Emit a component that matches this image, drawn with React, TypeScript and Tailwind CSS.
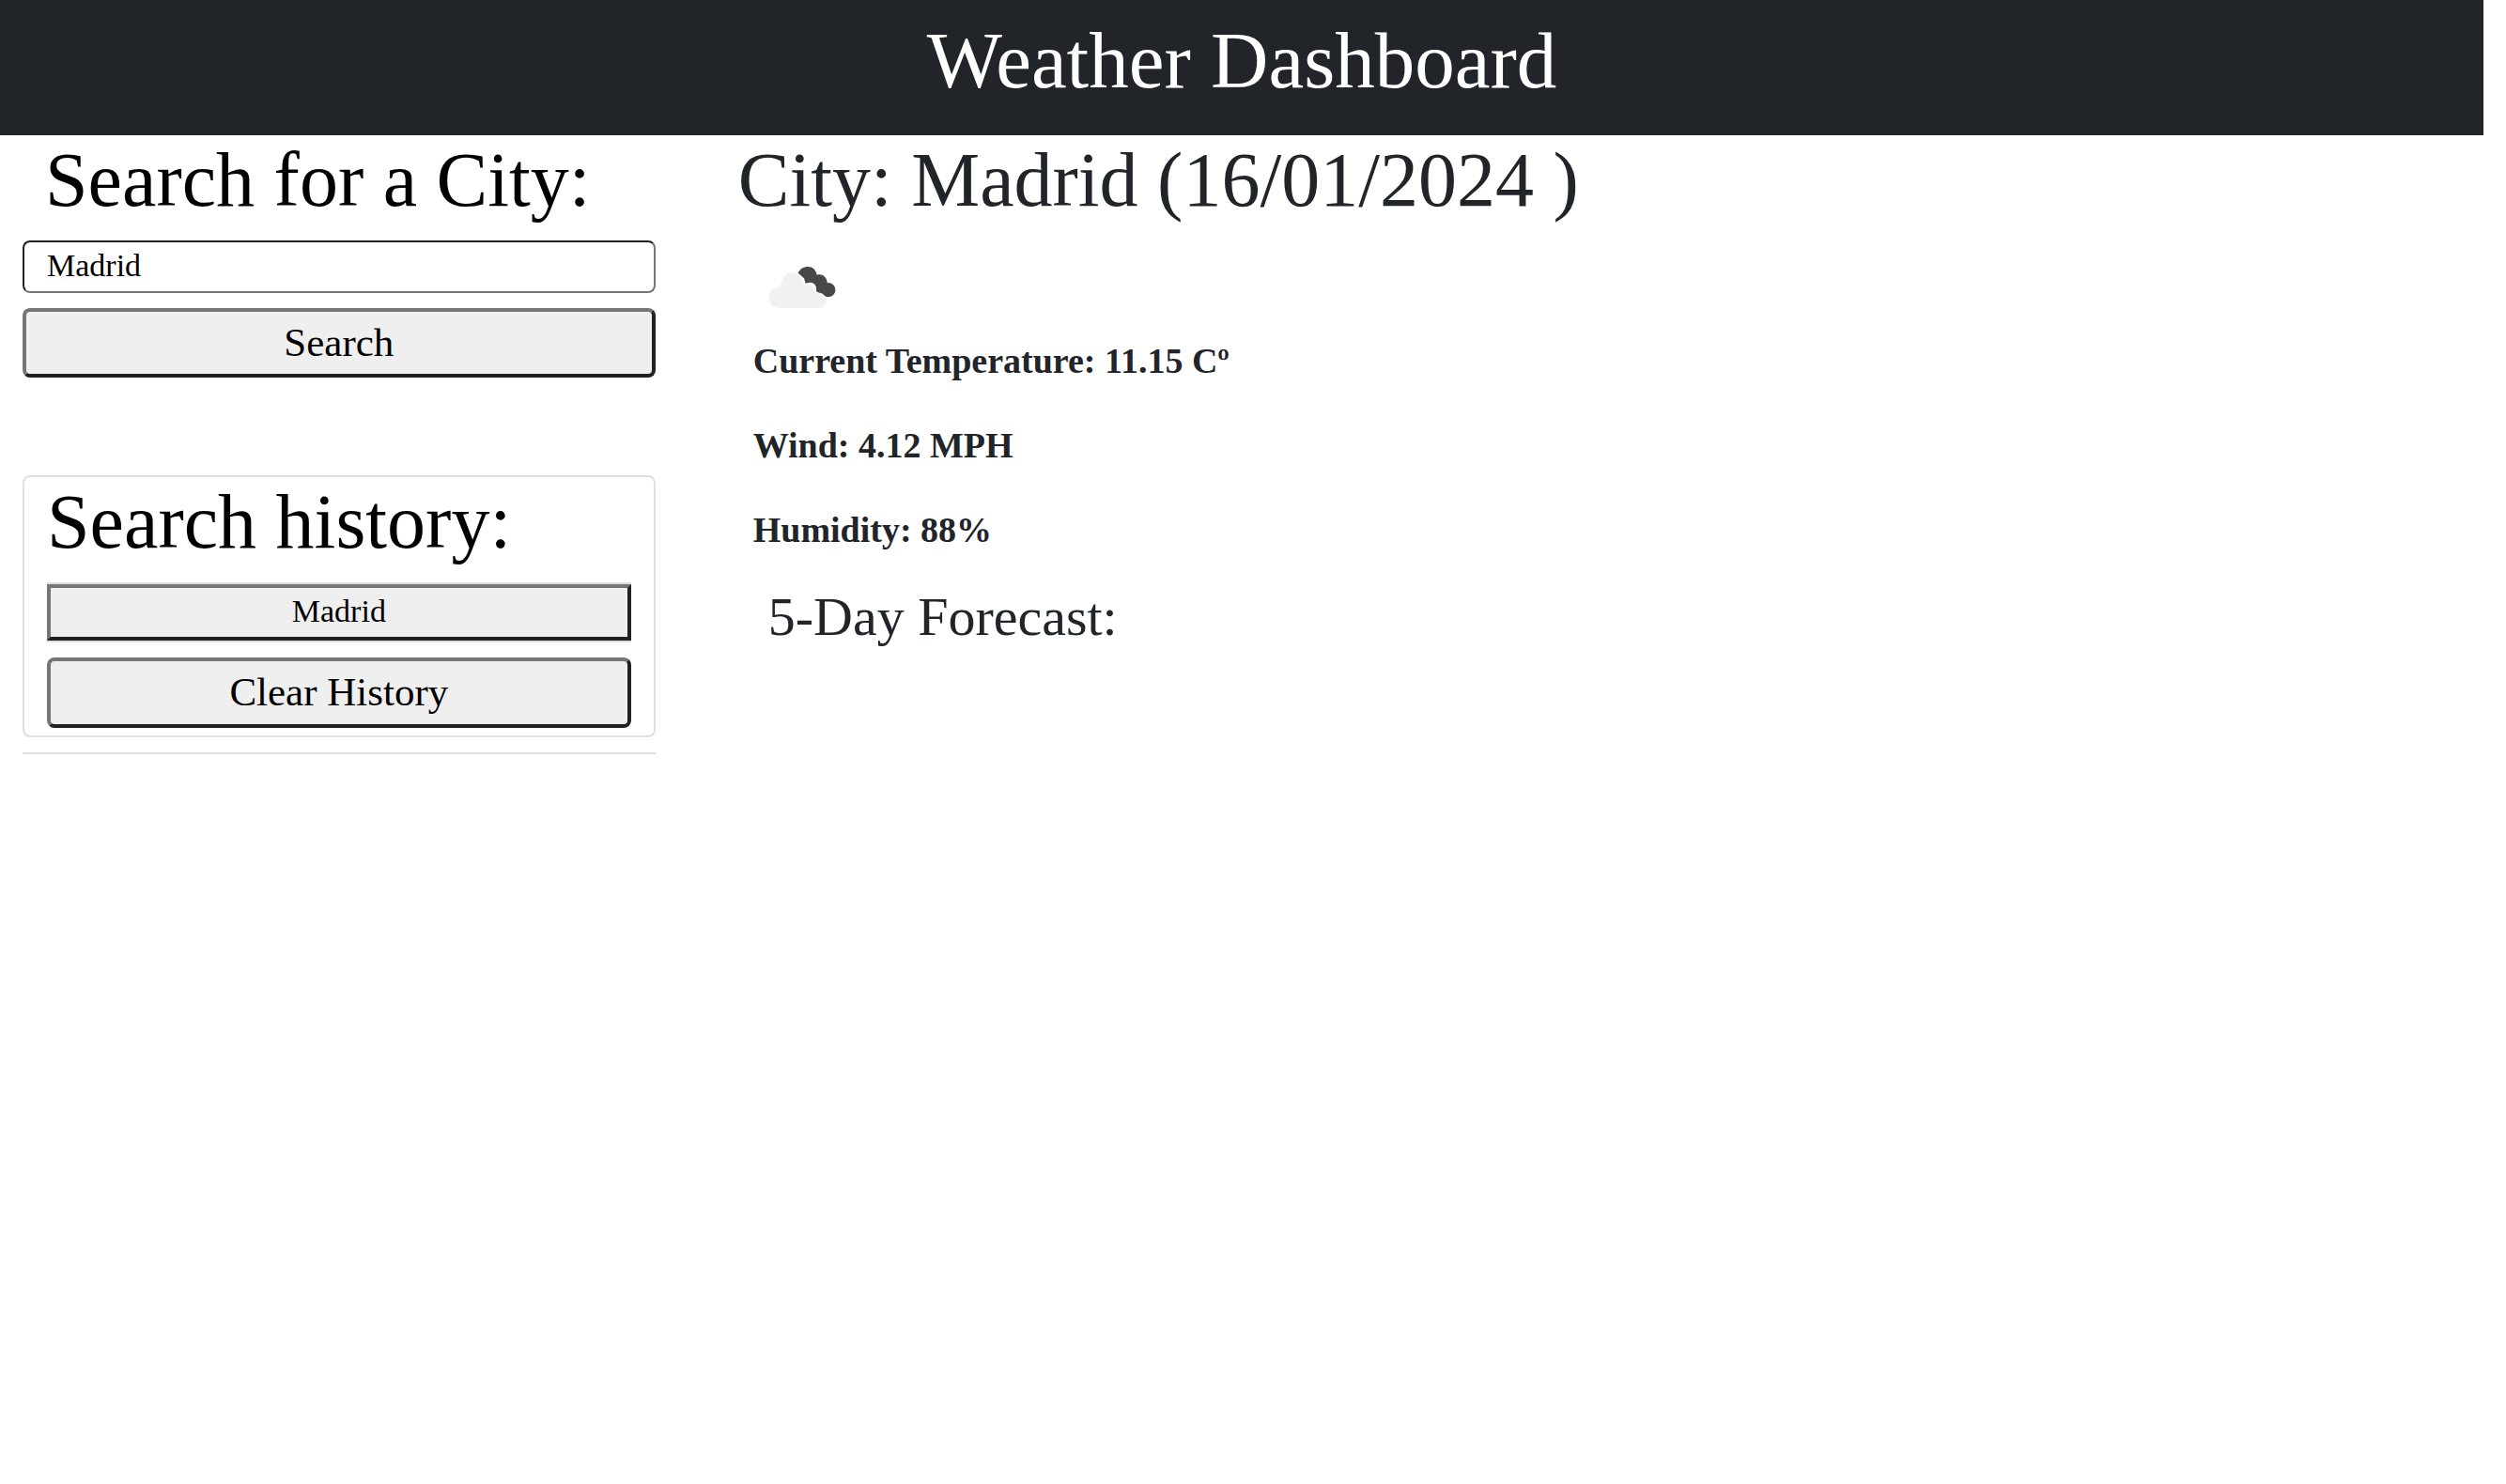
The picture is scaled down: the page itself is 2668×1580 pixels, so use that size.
import { useState } from "react";

const raised =
  "block w-full border-4 border-t-[#767676] border-l-[#767676] border-r-[#212121] border-b-[#212121] bg-[#efefef] text-center text-black";

const conditions = ["Current Temperature: 11.15 Cº", "Wind: 4.12 MPH", "Humidity: 88%"];

function BrokenClouds() {
  return (
    <svg viewBox="0 0 330 210" className="block h-[70px] w-[110px]" role="img" aria-label="Broken clouds">
      <path
        d="M143 62C150 48 160 42 174 42C190 42 200 52 203 68C220 63 235 74 236 93C251 92 262 102 262 116C262 129 252 138 239 138C232 138 226 135 222 128L202 122L200 104C196 95 186 91 177 93L167 95L162 79Z"
        fill="#48484a"
      />
      <path
        d="M80 174A33 33 0 0 1 50 141A33 33 0 0 1 87 107C88 82 101 60 122 60C139 60 151 71 156 85L163 101C180 91 197 101 199 127C214 125 222 130 226 139C232 141 234 146 233 152C231 166 221 174 208 174Z"
        fill="#f1f1f1"
      />
    </svg>
  );
}

export default function App() {
  const [city, setCity] = useState("Madrid");
  const [history, setHistory] = useState(["Madrid"]);

  return (
    <div className="min-h-screen bg-white font-['Liberation_Serif',serif] text-[#212529]">
      <header className="mr-6 bg-[#212529] pt-4 pb-8 text-center text-white">
        <h1 className="text-[85px] leading-[96px]">Weather Dashboard</h1>
      </header>

      <div className="flex items-start">
        <aside className="w-[27.05%] shrink-0 px-6">
          <form
            onSubmit={(e) => {
              e.preventDefault();
              if (city && !history.includes(city)) setHistory([city, ...history]);
            }}
          >
            <label htmlFor="city" className="mb-4 block pl-6 text-[82px] leading-[96px] whitespace-nowrap text-black">
              Search for a City:
            </label>
            <input
              id="city"
              type="text"
              value={city}
              onChange={(e) => setCity(e.target.value)}
              className="block h-14 w-full rounded-lg border-2 border-t-[#212121] border-r-[#767676] border-b-[#767676] border-l-[#212121] bg-white px-6 pb-0.5 text-[34px] text-black outline-none"
            />
            <button type="submit" className={`${raised} mt-4 h-[74px] rounded-lg pb-0.5 text-[43px] leading-none`}>
              Search
            </button>
          </form>

          <section className="mt-[104px] rounded-lg border-2 border-[#dfdfdf] px-6 pb-2">
            <h2 className="mb-4 text-[82px] leading-[96px] whitespace-nowrap text-black">Search history:</h2>
            <ul>
              {history.map((name) => (
                <li key={name} className="border-y-2 border-[#dfdfdf]">
                  <button
                    type="button"
                    onClick={() => setCity(name)}
                    className={`${raised} h-[60px] pb-0.5 text-[34px] leading-none`}
                  >
                    {name}
                  </button>
                </li>
              ))}
            </ul>
            <button
              type="button"
              onClick={() => setHistory([])}
              className={`${raised} mt-4 h-[75px] rounded-lg pb-0.5 text-[43px] leading-none`}
            >
              Clear History
            </button>
          </section>
          <hr className="mt-4 border-t-2 border-[#dee2e6]" />
        </aside>

        <main className="min-w-0 flex-1 pl-16">
          <h2 className="text-[82px] leading-[96px]">City: Madrid (16/01/2024 )</h2>
          <div className="pt-[30px] pb-[15px] pl-4">
            <BrokenClouds />
          </div>
          <div className="flex flex-col gap-8 pl-4">
            {conditions.map((line) => (
              <p key={line} className="text-[38px] leading-[58px] font-bold">
                {line}
              </p>
            ))}
          </div>
          <h3 className="mt-[30px] pl-8 text-[58px] leading-[68px]">5-Day Forecast:</h3>
        </main>
      </div>
    </div>
  );
}
